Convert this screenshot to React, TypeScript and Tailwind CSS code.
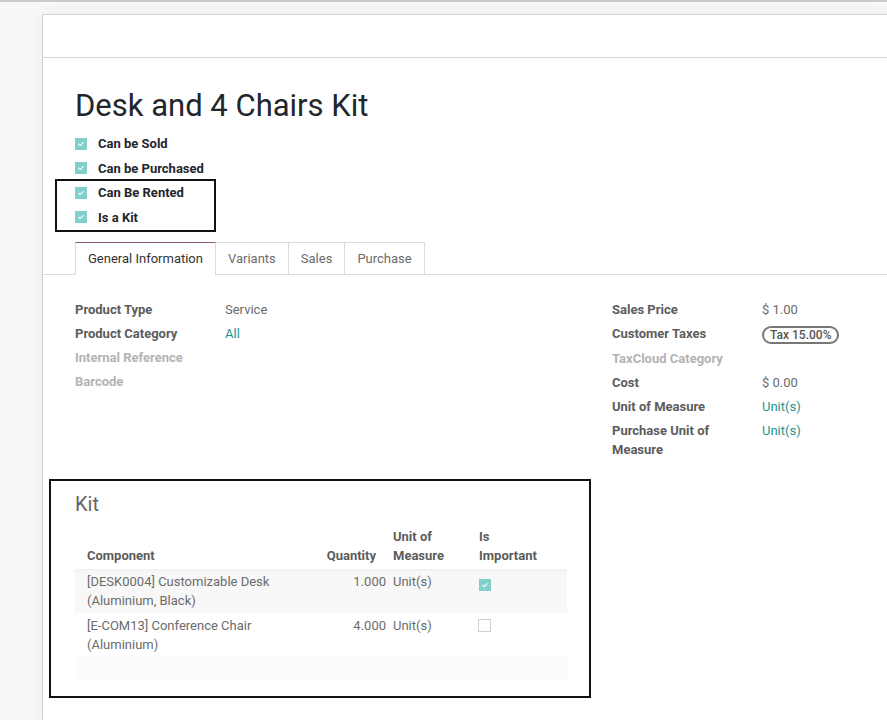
import React from "react";

function Check({ checked = true, className = "" }: { checked?: boolean; className?: string }) {
  if (!checked) {
    return <span className={"inline-block w-[13px] h-[13px] border border-[#cfcfcf] bg-white " + className} />;
  }
  return (
    <span className={"inline-flex items-center justify-center w-[12px] h-[12px] bg-[#82d0cb] " + className}>
      <svg width="8" height="8" viewBox="0 0 8 8">
        <path d="M1.8 4.2 L3.3 5.5 L6.2 2.6" stroke="#eaf8f7" strokeWidth="1.3" fill="none" strokeLinecap="round" strokeLinejoin="round" />
      </svg>
    </span>
  );
}

function Field({ label, value, muted = false }: { label: string; value?: React.ReactNode; muted?: boolean }) {
  return (
    <div className="flex py-[2px] leading-[20px]">
      <div className={"w-[150px] pr-[10px] font-bold " + (muted ? "text-[#b3b3b3]" : "text-[#5c5c5c]")}>{label}</div>
      <div className="text-[#6b6b6b]">{value}</div>
    </div>
  );
}

export default function App() {
  return (
    <div
      className="w-[887px] h-[720px] overflow-hidden bg-[#f7f7f7] border-t-2 border-[#cbcbcb] pl-[42px] pt-[12px] text-[13px]"
      style={{ fontFamily: "Roboto, 'Noto Sans', sans-serif" }}
    >
      <div className="h-full bg-white border-l border-t border-[#cfd3db] shadow-[0_0_14px_rgba(0,0,0,0.05)]">
        <div className="h-[43px] border-b border-[#d6d6de]" />
        <div className="pl-[32px] pt-[29px]">
          <h1 className="text-[31px] leading-[38px] text-[#22252b] font-normal">Desk and 4 Chairs Kit</h1>
          <div className="relative mt-[6.5px]">
            {["Can be Sold", "Can be Purchased", "Can Be Rented", "Is a Kit"].map((t) => (
              <div key={t} className="h-[24.5px] flex items-center">
                <Check />
                <span className="ml-[11px] font-bold text-[#23262b]">{t}</span>
              </div>
            ))}
            <div className="absolute left-[-20px] top-[47.75px] w-[161px] h-[53px] border-2 border-[#111]" />
          </div>

          <div className="-ml-[32px] pl-[32px] mt-[12.5px] flex border-b border-[#d9dde3] h-[33px]">
            <div className="h-[33px] px-[12px] pt-[6px] leading-[20px] border-t border-l border-r border-t-[#875a7b] border-l-[#d9dde3] border-r-[#d9dde3] bg-white text-[#333]">
              General Information
            </div>
            {["Variants", "Sales", "Purchase"].map((t) => (
              <div key={t} className="h-[32px] px-[12px] pt-[6px] leading-[20px] border-t border-r border-[#d9dde3] text-[#6b6b6b]">
                {t}
              </div>
            ))}
          </div>

          <div className="mt-[23px] grid grid-cols-[537px_1fr]">
            <div>
              <Field label="Product Type" value="Service" />
              <Field label="Product Category" value={<span className="text-[#1d958f]">All</span>} />
              <Field label="Internal Reference" muted />
              <Field label="Barcode" muted />
            </div>
            <div>
              <Field label="Sales Price" value="$ 1.00" />
              <div className="flex py-[2px] leading-[20px] min-h-[25px]">
                <div className="w-[150px] pr-[10px] font-bold text-[#5c5c5c]">Customer Taxes</div>
                <div className="pt-[1px]">
                  <span className="inline-flex items-center h-[18px] px-[6px] border-2 border-[#777] rounded-full text-[12px] font-medium text-[#555] leading-none">
                    Tax 15.00%
                  </span>
                </div>
              </div>
              <Field label="TaxCloud Category" muted />
              <Field label="Cost" value="$ 0.00" />
              <Field label="Unit of Measure" value={<span className="text-[#1d958f]">Unit(s)</span>} />
              <div className="flex py-[2px] leading-[19px]">
                <div className="w-[150px] pr-[20px] font-bold text-[#5c5c5c]">Purchase Unit of Measure</div>
                <div className="text-[#1d958f]">Unit(s)</div>
              </div>
            </div>
          </div>

          <div className="-ml-[26px] mt-[18px] w-[542px] border-2 border-[#111] pl-[24px] pr-[22px] pt-[11px] pb-[15px]">
            <div className="text-[20px] leading-[24px] text-[#666]">Kit</div>
            <table className="mt-[11px] w-[492px] table-fixed border-collapse">
              <colgroup>
                <col className="w-[241px]" />
                <col className="w-[75px]" />
                <col className="w-[76px]" />
                <col className="w-[100px]" />
              </colgroup>
              <thead>
                <tr className="font-bold text-[#5c5c5c] leading-[19px] align-bottom">
                  <th className="text-left pl-[12px] pb-[4px] font-bold">Component</th>
                  <th className="text-right pr-[15px] pb-[4px] font-bold">Quantity</th>
                  <th className="text-left pl-[2px] pb-[4px] font-bold">Unit of<br />Measure</th>
                  <th className="text-left pl-[12px] pb-[4px] font-bold">Is<br />Important</th>
                </tr>
              </thead>
              <tbody className="text-[#6b6b6b] leading-[19.5px] align-top">
                <tr className="bg-[#f8f8f8] shadow-[inset_0_2px_3px_rgba(0,0,0,0.03)]">
                  <td className="pl-[12px] py-[2.5px]">[DESK0004] Customizable Desk (Aluminium, Black)</td>
                  <td className="text-right pr-[5px] py-[2.5px]">1.000</td>
                  <td className="pl-[2px] py-[2.5px]">Unit(s)</td>
                  <td className="pl-[12px] pt-[6px]"><Check className="flex" /></td>
                </tr>
                <tr className="bg-white">
                  <td className="pl-[12px] py-[2.5px]">[E-COM13] Conference Chair (Aluminium)</td>
                  <td className="text-right pr-[5px] py-[2.5px]">4.000</td>
                  <td className="pl-[2px] py-[2.5px]">Unit(s)</td>
                  <td className="pl-[11px] pt-[5px]"><Check checked={false} className="block" /></td>
                </tr>
                <tr className="bg-[#fbfbfb]">
                  <td colSpan={4} className="h-[24px]" />
                </tr>
              </tbody>
            </table>
          </div>
        </div>
      </div>
    </div>
  );
}
